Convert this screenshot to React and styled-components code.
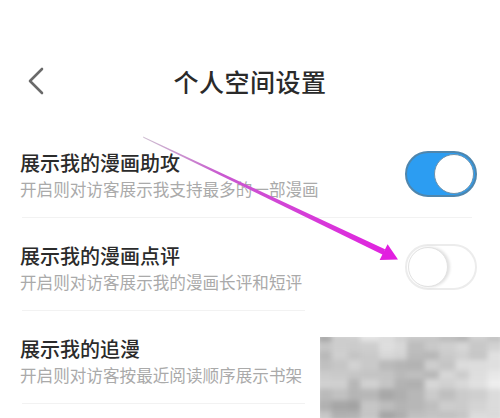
import React from 'react';
import styled, { createGlobalStyle } from 'styled-components';

const GlobalStyle = createGlobalStyle`
  * { box-sizing: border-box; }
  html, body {
    margin: 0;
    padding: 0;
    background: #ffffff;
  }
  body {
    font-family: "Noto Sans CJK SC", "Noto Sans", sans-serif;
    -webkit-font-smoothing: antialiased;
  }
`;

const settings = [
  { title: '展示我的漫画助攻', desc: '开启则对访客展示我支持最多的一部漫画', on: true },
  { title: '展示我的漫画点评', desc: '开启则对访客展示我的漫画长评和短评', on: false },
  { title: '展示我的追漫', desc: '开启则对访客按最近阅读顺序展示书架', on: null },
];

// tiny deterministic generator for the mosaic cells
function mosaicCells() {
  const cols = [14, 16, 12, 18, 15, 12, 17, 14, 16, 13, 18, 15];
  const rows = [7, 9, 8, 10, 8, 9, 11, 10, 9];
  let seed = 23;
  const rnd = () => {
    seed = (seed * 9301 + 49297) % 233280;
    return seed / 233280;
  };
  const cells = [];
  let y = 0;
  rows.forEach((h, ri) => {
    let x = 0;
    cols.forEach((w, ci) => {
      const base = 206 + Math.sin(ci * 0.6 + ri * 0.3) * 16 + (ci < 3 ? -26 : 0) + (ri > 5 ? -10 : 0);
      const g = Math.round(Math.min(246, Math.max(155, base + (rnd() - 0.5) * 36)));
      cells.push({ x, y, w, h, g, key: `${ri}-${ci}` });
      x += w;
    });
    y += h;
  });
  return cells;
}

export default function App() {
  const cells = mosaicCells();
  return (
    <>
      <GlobalStyle />
      <Page>
        <Header>
          <BackButton aria-label="返回">
            <svg width="18" height="28" viewBox="0 0 18 28">
              <path d="M15 2 L3 14 L15 26" fill="none" stroke="#6a6a6a" strokeWidth="2.6" strokeLinecap="round" strokeLinejoin="round" />
            </svg>
          </BackButton>
          <Title>个人空间设置</Title>
        </Header>

        <List>
          {settings.map((s) => (
            <Row key={s.title}>
              <Texts>
                <RowTitle>{s.title}</RowTitle>
                <RowDesc>{s.desc}</RowDesc>
              </Texts>
              {s.on !== null && (
                <Switch $on={s.on}>
                  <Knob $on={s.on} />
                </Switch>
              )}
            </Row>
          ))}
        </List>

        <Arrow width="500" height="418" viewBox="0 0 500 418">
          <defs>
            <linearGradient id="arrowFade" x1="143" y1="137" x2="398" y2="259" gradientUnits="userSpaceOnUse">
              <stop offset="0" stopColor="#b9a2bd" stopOpacity="0.7" />
              <stop offset="0.3" stopColor="#c95ad0" />
              <stop offset="1" stopColor="#e21fe0" />
            </linearGradient>
          </defs>
          <polygon points="143,136.5 143.4,137.8 383.4,255 385,249.2" fill="url(#arrowFade)" />
          <polygon points="398,259.5 379.6,260 387.6,244.2" fill="#e21fe0" />
        </Arrow>

        <Mosaic>
          <MosaicTile>
            <svg width="186" height="87" viewBox="0 0 180 81" preserveAspectRatio="none">
              {cells.map((c) => (
                <rect key={c.key} x={c.x} y={c.y} width={c.w + 0.5} height={c.h + 0.5} fill={`rgb(${c.g},${c.g},${c.g})`} />
              ))}
            </svg>
          </MosaicTile>
        </Mosaic>
      </Page>
    </>
  );
}

const Page = styled.div`
  position: relative;
  width: 500px;
  height: 418px;
  overflow: hidden;
  background: #fff;
`;

const Header = styled.div`
  position: relative;
  display: flex;
  align-items: center;
  justify-content: center;
  height: 60px;
  margin-top: 51px;
`;

const BackButton = styled.div`
  position: absolute;
  left: 27px;
  top: 16px;
  display: flex;
`;

const Title = styled.h1`
  margin: 0;
  font-size: 25px;
  font-weight: 500;
  color: #2a2a2a;
  letter-spacing: 0.5px;
`;

const List = styled.div`
  margin-top: 14px;
`;

const Row = styled.div`
  display: flex;
  align-items: center;
  margin: 0 28px 0 22px;
  padding: 25px 0 14px;
  border-bottom: 1.5px solid #f2f2f2;
`;

const Texts = styled.div`
  flex: 1;
  display: flex;
  flex-direction: column;
  margin-left: -2px;
`;

const RowTitle = styled.div`
  font-size: 20px;
  line-height: 26px;
  font-weight: 500;
  color: #2b2b2b;
`;

const RowDesc = styled.div`
  font-size: 16.6px;
  line-height: 27px;
  color: #aaaaaa;
`;

const Switch = styled.div`
  position: relative;
  width: 72px;
  height: 46px;
  border-radius: 23px;
  margin-top: -6px;
  margin-right: -5px;
  background: ${(p) => (p.$on ? '#2c9df2' : '#ffffff')};
  border: 2px solid ${(p) => (p.$on ? '#4f86ad' : '#ececec')};
  display: flex;
  align-items: center;
  justify-content: ${(p) => (p.$on ? 'flex-end' : 'flex-start')};
  padding: 0 1px;
`;

const Knob = styled.div`
  width: 40px;
  height: 40px;
  border-radius: 50%;
  background: #fff;
  border: 1.5px solid ${(p) => (p.$on ? '#6f92ab' : '#e2e2e2')};
  box-shadow: ${(p) => (p.$on ? 'none' : '2px 0 3px rgba(0,0,0,0.12)')};
`;

const Arrow = styled.svg`
  position: absolute;
  left: 0;
  top: 0;
  pointer-events: none;
`;

const Mosaic = styled.div`
  position: absolute;
  left: 305px;
  top: 309px;
  width: 195px;
  height: 109px;
  background: #fff;
  padding: 28px 0 0 15px;
`;

const MosaicTile = styled.div`
  width: 180px;
  height: 81px;
  overflow: hidden;

  svg {
    display: block;
    margin: -3px 0 0 -3px;
    filter: blur(2.5px);
  }
`;
